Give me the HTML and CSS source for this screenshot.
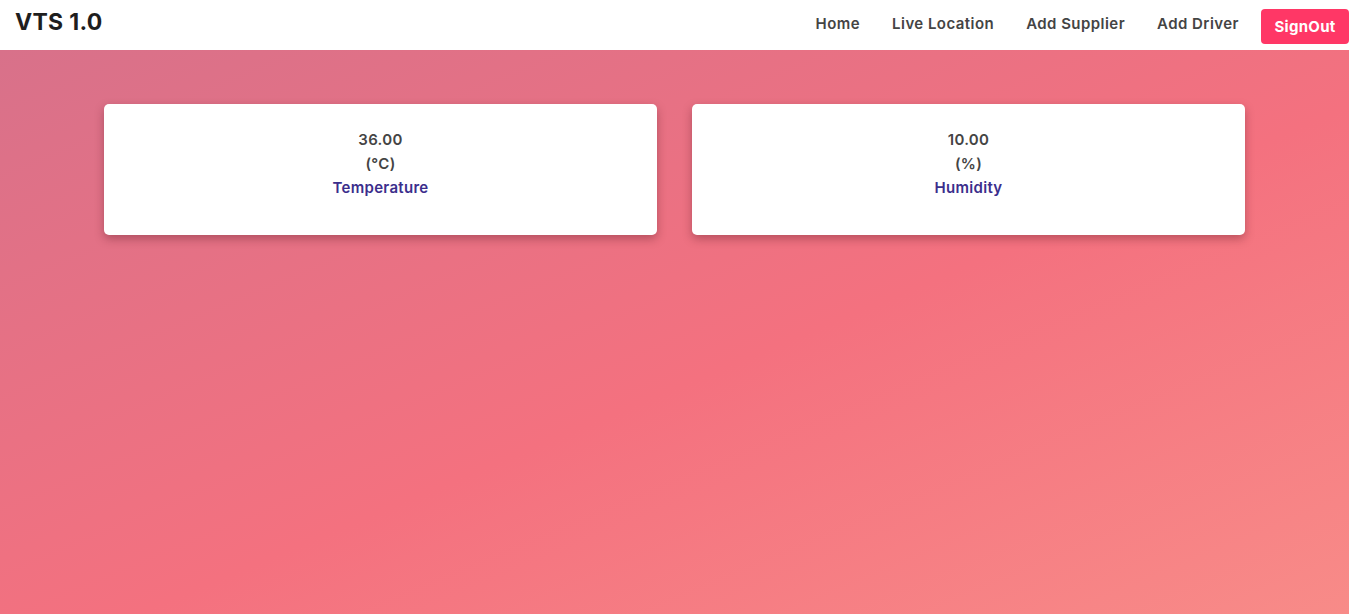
FILE: index.html
```html
<!DOCTYPE html>
<html>
<head>
<meta charset="utf-8">
<title>VTS 1.0</title>
<link rel="stylesheet" href="styles.css">
</head>
<body>
<header class="navbar">
  <div class="brand">VTS 1.0</div>
  <nav class="nav">
    <a class="nav-link" href="#">Home</a>
    <a class="nav-link" href="#">Live Location</a>
    <a class="nav-link" href="#">Add Supplier</a>
    <a class="nav-link" href="#">Add Driver</a>
    <a class="signout" href="#">SignOut</a>
  </nav>
</header>
<main class="main">
  <div class="cards">
    <div class="card">
      <div class="value">36.00</div>
      <div class="unit">(°C)</div>
      <div class="label">Temperature</div>
    </div>
    <div class="card">
      <div class="value">10.00</div>
      <div class="unit">(%)</div>
      <div class="label">Humidity</div>
    </div>
  </div>
</main>
</body>
</html>
```
FILE: styles.css
```css
* { box-sizing: border-box; }
html, body { margin: 0; height: 100%; }
body {
  font-family: "Inter", "Open Sans", "Liberation Sans", sans-serif;
  display: flex;
  flex-direction: column;
  min-height: 614px;
  overflow: hidden;
}
.navbar {
  height: 50px;
  background: #fff;
  display: flex;
  align-items: center;
  justify-content: space-between;
  padding-left: 15px;
  flex-shrink: 0;
}
.brand {
  font-size: 23px;
  font-weight: 700;
  letter-spacing: 0.3px;
  color: #1e1e1e;
  margin-top: -6px;
}
.nav {
  display: flex;
  align-items: center;
}
.nav-link {
  font-size: 15px;
  font-weight: 600;
  letter-spacing: 0.45px;
  color: #444;
  text-decoration: none;
  margin-right: 32px;
  margin-top: -3px;
}
.nav-link:nth-child(4) { margin-right: 22px; }
.signout {
  background: #ff3766;
  color: #fff;
  font-size: 15px;
  font-weight: 700;
  letter-spacing: 0.3px;
  text-decoration: none;
  height: 35px;
  width: 88px;
  display: flex;
  align-items: center;
  justify-content: center;
  border-radius: 4px;
  margin-top: 3px;
}
.main {
  flex: 1;
  background: linear-gradient(to bottom right, #d8718a 0%, #f4717f 55%, #f88b88 100%);
  padding: 54px 104px;
}
.cards {
  display: grid;
  grid-template-columns: 1fr 1fr;
  gap: 35px;
}
.card {
  background: #fff;
  border-radius: 5px;
  height: 131px;
  box-shadow: 0 4px 10px rgba(80, 20, 30, 0.35);
  display: flex;
  flex-direction: column;
  align-items: center;
  padding-top: 24px;
  font-size: 15px;
  font-weight: 600;
  letter-spacing: 0.3px;
  line-height: 24px;
}
.value, .unit { color: #444; }
.label { color: #3b2e8c; }
```
